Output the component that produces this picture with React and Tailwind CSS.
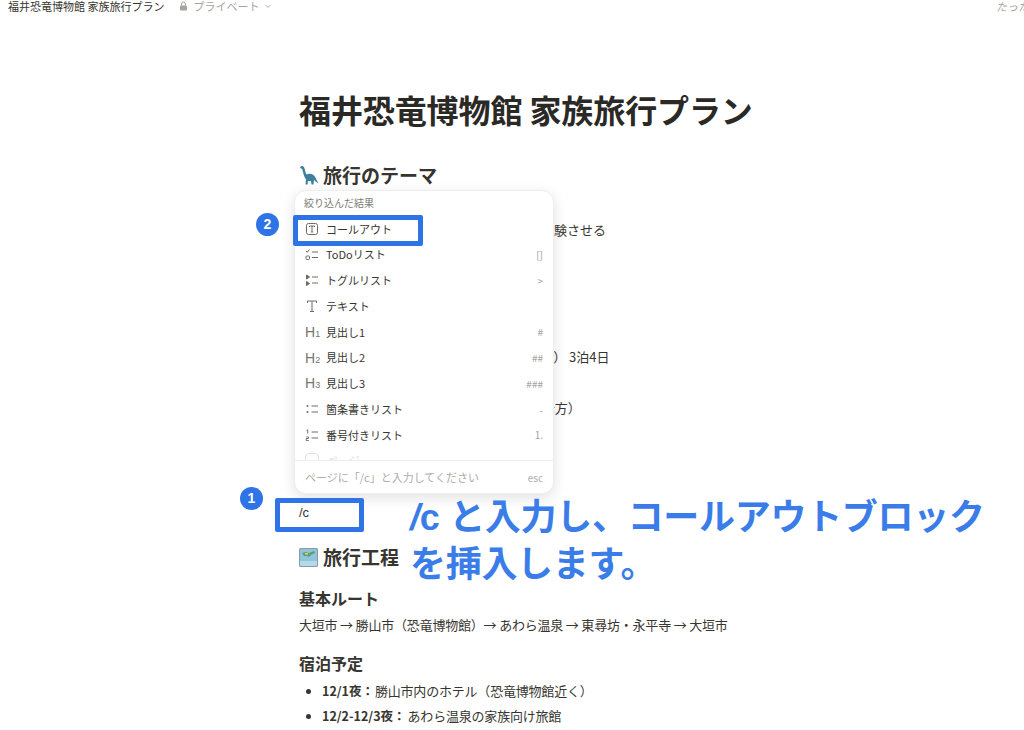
import React from 'react';

const JP = 'font-["Noto_Sans_CJK_JP",sans-serif]';

const CalloutIcon = () => (
  <svg width="14" height="14" viewBox="0 0 14 14" fill="none" stroke="#6b6a66" strokeWidth="1">
    <rect x="1.5" y="1.5" width="11" height="11" rx="2" />
    <path d="M4.5 5V4h5v1M7 4v6M5.8 10h2.4" />
  </svg>
);

const TodoIcon = () => (
  <svg width="14" height="14" viewBox="0 0 14 14" fill="none" stroke="#6b6a66" strokeWidth="1">
    <path d="M1 3l1.3 1.3L4.5 1.5" />
    <rect x="1" y="8" width="3.5" height="3.5" rx="0.8" />
    <path d="M7 4h6M7 9.5h6" />
  </svg>
);

const ToggleIcon = () => (
  <svg width="14" height="14" viewBox="0 0 14 14" fill="none" stroke="#6b6a66" strokeWidth="1">
    <path d="M1.5 2l3 2-3 2z" fill="#6b6a66" />
    <path d="M1.5 8.5l3 2-3 2z" fill="#6b6a66" />
    <path d="M7 4h6M7 10h6" />
  </svg>
);

const TextIcon = () => (
  <svg width="14" height="14" viewBox="0 0 14 14" fill="none" stroke="#6b6a66" strokeWidth="1">
    <path d="M2.5 4V2h9v2M7 2v10M5 12.5h4" />
  </svg>
);

const BulletIcon = () => (
  <svg width="14" height="14" viewBox="0 0 14 14" fill="none" stroke="#6b6a66" strokeWidth="1">
    <circle cx="2.5" cy="4" r="1" fill="#6b6a66" stroke="none" />
    <circle cx="2.5" cy="10" r="1" fill="#6b6a66" stroke="none" />
    <path d="M6.5 4H13M6.5 10H13" />
  </svg>
);

const NumberIcon = () => (
  <svg width="14" height="14" viewBox="0 0 14 14" fill="none" stroke="#6b6a66" strokeWidth="1">
    <path d="M1.5 2.5l1.2-.8v4" strokeWidth="0.9" />
    <path d="M1.2 9h2.4v1.5H1.2V12.5h2.6" strokeWidth="0.9" />
    <path d="M6.5 4H13M6.5 10H13" />
  </svg>
);

const HeadingIcon = ({ n }) => (
  <span className="text-[#77756f] text-[14px] leading-none font-['Liberation_Sans',sans-serif]">
    H<span className="text-[9px]">{n}</span>
  </span>
);

const DinoIcon = () => (
  <svg width="20" height="22" viewBox="0 0 20 22" className="shrink-0">
    <path
      d="M1 3.500C1.500 2 3.500 1.500 4.500 2.500 6 4 6 8 7.500 10.500c2-1 5.500-1 7.500 1 1.500 1.500 2.500 5 4.500 7.500-2-.5-3.500-2-4.500-3l-.5 4.500h-2l-.5-3.500H9l-.5 3.500h-2L7 15.500C5 13 4 8 3.200 5 2.600 4.500 1.500 4.500 1 3.500z"
      fill="#3e7f9f"
    />
  </svg>
);

const MapIcon = () => (
  <svg width="19" height="19" viewBox="0 0 19 19" className="shrink-0">
    <rect width="19" height="19" rx="1.500" fill="#8fc4dc" />
    <rect y="13" width="19" height="6" fill="#b4d9e8" />
    <path d="M3 5l4-1 3 1 5-2 1 2-4 2-2 2-2-1-3 0z" fill="#5f9f78" />
    <path d="M6 5h3v1.500H6z" fill="#e8d36a" />
    <rect x="0.500" y="0.500" width="18" height="18" rx="1.500" fill="none" stroke="#8a9aa3" />
  </svg>
);

const menuItems = [
  { icon: <CalloutIcon />, label: 'コールアウト', hint: '' },
  { icon: <TodoIcon />, label: 'ToDoリスト', hint: '[]' },
  { icon: <ToggleIcon />, label: 'トグルリスト', hint: '>' },
  { icon: <TextIcon />, label: 'テキスト', hint: '' },
  { icon: <HeadingIcon n="1" />, label: '見出し1', hint: '#' },
  { icon: <HeadingIcon n="2" />, label: '見出し2', hint: '##' },
  { icon: <HeadingIcon n="3" />, label: '見出し3', hint: '###' },
  { icon: <BulletIcon />, label: '箇条書きリスト', hint: '-' },
  { icon: <NumberIcon />, label: '番号付きリスト', hint: '1.' },
];

const SlashMenu = () => (
  <div className="absolute left-[294px] top-[190px] w-[260px] h-[304px] bg-white rounded-xl border border-[#eeeeec] shadow-[0_4px_14px_rgba(15,15,15,0.12)] flex flex-col overflow-hidden">
    <div className="px-[9px] pt-[4px] h-[25px] text-[10px] leading-[15px] text-[#7d7a75]">絞り込んだ結果</div>
    <div className="flex-1 overflow-hidden relative">
      {menuItems.map((item) => (
        <div key={item.label} className="h-[25.75px] flex items-center pl-[10px] pr-[10px]">
          <span className="w-[21px] flex shrink-0">{item.icon}</span>
          <span className="flex-1 text-[11px] text-[#37352f]">{item.label}</span>
          <span className="text-[10px] text-[#a5a39e]">{item.hint}</span>
        </div>
      ))}
      <div className="h-[25px] pl-[10px] flex items-center gap-2 opacity-20 text-[11px] text-[#37352f]">
        <span className="w-[14px] h-[14px] border border-[#6b6a66] rounded-sm" />
        <span>ページ</span>
      </div>
    </div>
    <div className="h-[33px] shrink-0 border-t border-[#eeeeec] flex items-center justify-between px-[10px] text-[11px] text-[#aeaca7]">
      <span>ページに「/c」と入力してください</span>
      <span className="text-[10px]">esc</span>
    </div>
  </div>
);

const Badge = ({ n, className }) => (
  <div className={`absolute w-[23px] h-[23px] rounded-full bg-[#2f74e6] text-white text-[14px] font-bold flex items-center justify-center font-["Liberation_Sans",sans-serif] ${className}`}>
    {n}
  </div>
);

export default function App() {
  return (
    <div className={`relative w-[1024px] h-[730px] overflow-hidden bg-white text-[#37352f] ${JP}`}>
      {/* top bar */}
      <div className="h-[12px] flex items-center pl-[8px] text-[11px] leading-[12px] overflow-hidden">
        <span className="text-[#37352f]">福井恐竜博物館 家族旅行プラン</span>
        <span className="ml-[15px] mr-[4px] w-[9px] h-[9px] flex items-end">
          <svg width="9" height="10" viewBox="0 0 9 10">
            <path d="M2.500 4.500V3a2 2 0 014 0v1.500" fill="none" stroke="#a5a39e" strokeWidth="1" />
            <rect x="1" y="4.500" width="7" height="5" rx="1" fill="#a5a39e" />
          </svg>
        </span>
        <span className="ml-[1px] text-[#a5a39e]">プライベート</span>
        <svg width="8" height="8" viewBox="0 0 8 8" className="ml-[5px]" fill="none" stroke="#b5b3ae" strokeWidth="1">
          <path d="M1.500 3l2.500 2.500L6.500 3" />
        </svg>
        <span className="ml-auto w-[28px] shrink-0 overflow-hidden whitespace-nowrap text-[#a5a39e] italic">たった今</span>
      </div>

      {/* page body */}
      <div className="ml-[299px] w-[460px]">
        <h1 className="mt-[74px] h-[46px] text-[32px] leading-[46px] font-bold text-[#2a2926] whitespace-nowrap tracking-[-0.1px]">福井恐竜博物館 家族旅行プラン</h1>

        <h2 className="mt-[29px] h-[28px] flex items-center gap-[4px] text-[19px] leading-[28px] font-bold">
          <DinoIcon />
          旅行のテーマ
        </h2>
        <p className="mt-[31px] ml-[8px] h-[20px] text-[13px] leading-[20px] whitespace-nowrap">子どもたちに本物の恐竜化石と大自然を体験させる</p>
        <p className="mt-[107px] h-[20px] text-[13px] leading-[20px] whitespace-nowrap">日程：2025年12月1日（月）〜12月4日（木） 3泊4日</p>
        <p className="mt-[31px] h-[20px] text-[13px] leading-[20px] whitespace-nowrap">参加者：大人2名、子ども2名の親子4人（母方）</p>

        <p className="mt-[85px] h-[20px] text-[13px] leading-[20px] font-['Liberation_Sans',sans-serif]">/c</p>

        <h2 className="mt-[20px] h-[28px] flex items-center gap-[5px] text-[19px] leading-[28px] font-bold">
          <MapIcon />
          旅行工程
        </h2>
        <h3 className="mt-[15px] h-[24px] text-[16px] leading-[24px] font-bold">基本ルート</h3>
        <p className="mt-[5px] h-[20px] text-[13px] leading-[20px] whitespace-nowrap tracking-[-0.2px]">大垣市 → 勝山市（恐竜博物館）→ あわら温泉 → 東尋坊・永平寺 → 大垣市</p>
        <h3 className="mt-[16px] h-[24px] text-[16px] leading-[24px] font-bold">宿泊予定</h3>
        <ul className="mt-[6px] flex flex-col gap-[5px] text-[13px] leading-[20px]">
          <li className="flex items-center">
            <span className="ml-[7px] mr-[11px] w-[5px] h-[5px] rounded-full bg-[#37352f]" />
            <span className="font-semibold text-[12.5px]">12/1夜：</span>
            <span className="ml-[1px] tracking-[-0.2px]">勝山市内のホテル（恐竜博物館近く）</span>
          </li>
          <li className="flex items-center">
            <span className="ml-[7px] mr-[11px] w-[5px] h-[5px] rounded-full bg-[#37352f]" />
            <span className="font-semibold text-[12.5px]">12/2-12/3夜：</span>
            <span className="ml-[2px] tracking-[-0.2px]">あわら温泉の家族向け旅館</span>
          </li>
        </ul>
      </div>

      <SlashMenu />

      {/* annotations */}
      <div className="absolute left-[293px] top-[215px] w-[130px] h-[31px] border-[5px] border-[#2f74e6] rounded-[2px]" />
      <div className="absolute left-[275px] top-[498px] w-[89px] h-[34px] border-[5px] border-[#2f74e6] rounded-[2px]" />
      <Badge n="2" className="left-[256px] top-[213px]" />
      <Badge n="1" className="left-[240px] top-[487px]" />
      <div className="absolute left-[410px] top-[491px] w-[590px] text-[36px] font-semibold text-[#3b7de8] tracking-[-0.3px]">
        <div className="h-[47px] leading-[47px] whitespace-nowrap">
          <span className="font-['Liberation_Sans',sans-serif] font-bold italic">/</span>
          <span className="font-['Liberation_Sans',sans-serif] font-bold">c </span>
          と入力し、コールアウトブロック
        </div>
        <div className="h-[47px] leading-[47px] whitespace-nowrap">を挿入します。</div>
      </div>
    </div>
  );
}
